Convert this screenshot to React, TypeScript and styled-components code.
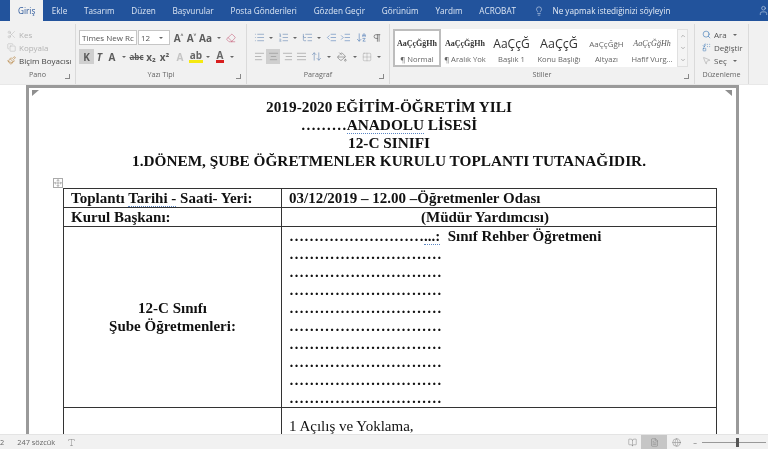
import React from "react";
import styled, { createGlobalStyle } from "styled-components";
import {
  Scissors, Copy, Paintbrush, Eraser, List, ListOrdered, ListTree, IndentDecrease, IndentIncrease,
  ArrowDownAZ, Pilcrow, AlignLeft, AlignCenter, AlignRight, AlignJustify, ArrowUpDown, PaintBucket,
  Grid2x2, Search, Replace, MousePointer2, User, Lightbulb, Move, BookOpen, FileText, Globe, Type, ChevronDown, ChevronUp,
} from "lucide-react";

const Global = createGlobalStyle`
  html, body { margin: 0; padding: 0; background: #fff; }
  * { box-sizing: border-box; }
`;

const Shell = styled.div`
  width: 768px; height: 449px; overflow: hidden; display: flex; flex-direction: column;
  font-family: "Open Sans", "Noto Sans", sans-serif; background: #fff; filter: blur(0.35px);
`;
const TabBar = styled.div`
  height: 21px; flex: none; background: #22539c; display: flex; align-items: stretch; padding-left: 10px; color: #dbe5f3; font-size: 8.2px;
`;
const Tab = styled.div<{ $active?: boolean }>`
  display: flex; align-items: center; padding: 0 8.4px; white-space: nowrap;
  ${(p) => p.$active && "background:#f1f1f1;color:#2b579a;margin-right:0;padding:0 8px;"}
`;
const Tell = styled.div`
  display: flex; align-items: center; gap: 8px; margin-left: 10px; white-space: nowrap; color: #e4ebf5; flex: 1;
`;
const UserSlot = styled.div`
  display: flex; align-items: center; padding-right: 0; margin-right: -1px;
`;
const Ribbon = styled.div`
  height: 63px; flex: none; background: #f1f1f1; display: flex; color: #555; font-size: 8px;
`;
const Group = styled.div<{ $w: number }>`
  width: ${(p) => p.$w}px; flex: none; display: flex; flex-direction: column; border-right: 1px solid #dadada; margin-top: 3px; position: relative;
`;
const GroupBody = styled.div`
  flex: 1; min-height: 0; display: flex; flex-direction: column; padding-top: 4px;
`;
const GroupLabel = styled.div`
  height: 17px; flex: none; text-align: center; font-size: 7.2px; color: #666; line-height: 14px;
`;
const Launcher = styled.span`
  position: absolute; right: 5px; bottom: 5px; width: 5px; height: 5px; border-right: 1px solid #888; border-bottom: 1px solid #888;
`;
const ClipRow = styled.div<{ $dim?: boolean }>`
  height: 15px; display: flex; align-items: center; gap: 3px; padding-left: 7px; font-size: 8px; color: ${(p) => (p.$dim ? "#b4b4b4" : "#444")}; white-space: nowrap;
`;
const ToolRow = styled.div<{ $pad: number }>`
  height: 19px; display: flex; align-items: center; padding-left: ${(p) => p.$pad}px;
`;
const FontBox = styled.div<{ $w: number }>`
  width: ${(p) => p.$w}px; height: 15px; background: #fff; border: 1px solid #c6c6c6; margin-right: 1px; font-size: 8px; color: #555; display: flex; align-items: center; justify-content: space-between; padding: 0 3px 0 2px; white-space: nowrap; overflow: hidden;
`;
const Tool = styled.div<{ $w?: number; $active?: boolean; $color?: string }>`
  width: ${(p) => p.$w ?? 14}px; height: 15px; flex: none; display: flex; align-items: center; justify-content: center;
  background: ${(p) => (p.$active ? "#cfcfcf" : "transparent")}; color: ${(p) => p.$color ?? "#5b5b5b"};
  font-size: 10px; font-weight: 700; white-space: nowrap;
`;
const Caret = styled.span`
  width: 0; height: 0; flex: none; border-left: 2px solid transparent; border-right: 2px solid transparent; border-top: 2px solid #666; margin: 0 3px 0 3px;
`;
const Colored = styled.span<{ $c: string }>`
  display: inline-block; line-height: 10px; border-bottom: 3px solid ${(p) => p.$c}; font-size: 10px; font-weight: 700; color: #666; padding: 0 1px;
`;
const Gallery = styled.div`
  margin: 1px 0 0 3px; height: 38px; width: 295px; display: flex; background: #fff; align-items: stretch;
`;
const StyleItem = styled.div<{ $w: number; $selected?: boolean }>`
  width: ${(p) => p.$w}px; flex: none; display: flex; flex-direction: column; align-items: center; justify-content: space-between; padding: 7px 0 2px; white-space: nowrap; overflow: hidden;
  ${(p) => (p.$selected ? "border: 2.5px solid #bdbdbd; padding: 5px 0 0;" : "")}
`;
const Preview = styled.div<{ $font: string; $size: number; $bold?: boolean; $italic?: boolean; $color?: string }>`
  font-family: ${(p) => p.$font}; font-size: ${(p) => p.$size}px; line-height: 15px; height: 15px; color: ${(p) => p.$color ?? "#333"};
  font-weight: ${(p) => (p.$bold ? 700 : 400)}; font-style: ${(p) => (p.$italic ? "italic" : "normal")};
`;
const StyleName = styled.div`
  font-size: 7.6px; line-height: 12px; color: #666;
`;
const GalleryScroll = styled.div`
  width: 11px; flex: none; margin-left: auto; display: flex; flex-direction: column; background: #f4f4f4; border: 1px solid #e0e0e0; color: #777; align-items: center; justify-content: space-around;
`;
const EditRow = styled.div`
  height: 15px; display: flex; align-items: center; gap: 3px; padding-left: 7px; font-size: 8px; color: #555; white-space: nowrap;
`;
const Doc = styled.div`
  flex: 1; min-height: 0; overflow: hidden; padding: 0 29px 0 26px; border-top: 1px solid #e8e8e8;
`;
const Page = styled.div`
  position: relative; height: 100%; border: 3px solid #9a9a9a; border-bottom: 0; padding: 10px 21px 0 34px;
  font-family: "Liberation Serif", "Times New Roman", serif; color: #111;
`;
const Corner = styled.span<{ $right?: boolean }>`
  position: absolute; top: 2px; ${(p) => (p.$right ? "right: 4px;" : "left: 3px;")} width: 0; height: 0;
  border-top: 6px solid #8f8f8f; ${(p) => (p.$right ? "border-left: 7px solid transparent;" : "border-right: 7px solid transparent;")}
`;
const Title = styled.div`
  text-align: center; font-weight: 700; font-size: 15.3px; line-height: 18px; white-space: nowrap; margin-left: 0;
`;
const Squiggle = styled.span`
  border-bottom: 1px dotted #5b87c5;
`;
const TableWrap = styled.div`
  position: relative; margin-top: 18px;
`;
const MoveHandle = styled.span`
  position: absolute; left: -10px; top: -10px; width: 10px; height: 10px; border: 1px solid #aaa; background: #fff; color: #555; display: flex; align-items: center; justify-content: center;
`;
const Table = styled.table`
  border-collapse: collapse; width: 653px; table-layout: fixed; font-size: 15px; line-height: 18px;
`;
const Cell = styled.td<{ $indent?: number; $center?: boolean; $bold?: boolean }>`
  border: 1px solid #333; padding: 0 0 0 ${(p) => p.$indent ?? 7}px; font-weight: ${(p) => (p.$bold ? 700 : 400)};
  white-space: nowrap; vertical-align: ${(p) => (p.$center ? "middle" : "top")}; ${(p) => (p.$center ? "text-align:center;padding:0;" : "")}
`;
const Status = styled.div`
  height: 15px; flex: none; background: #f1f1f1; display: flex; align-items: center; font-size: 7.4px; color: #666; border-top: 1px solid #e4e4e4;
`;
const StatusWords = styled.span`
  margin-left: 13px; margin-right: 12px; white-space: nowrap;
`;
const ViewBtn = styled.div<{ $active?: boolean; $w: number }>`
  width: ${(p) => p.$w}px; height: 14px; display: flex; align-items: center; justify-content: center; background: ${(p) => (p.$active ? "#c6c6c6" : "transparent")}; color: #777;
`;
const Slider = styled.div`
  width: 64px; height: 1px; background: #999; margin-left: 5px; position: relative;
`;
const Thumb = styled.span`
  position: absolute; left: 34px; top: -4px; width: 3px; height: 9px; background: #555;
`;

const dots = "………………………";
const fillLines = ["…………………………", "…………………………", "…………………………", "…………………………", "…………………………", "…………………………", "…………………………", "…………………………", "…………………………"];
const DotLine = styled.div`
  letter-spacing: 0.02em;
`;

export default function App() {
  return (
    <Shell>
      <Global />
      <TabBar>
        <Tab $active>Giriş</Tab>
        {["Ekle", "Tasarım", "Düzen", "Başvurular", "Posta Gönderileri", "Gözden Geçir", "Görünüm", "Yardım", "ACROBAT"].map((t) => (
          <Tab key={t}>{t}</Tab>
        ))}
        <Tell>
          <Lightbulb size={10} strokeWidth={1.3} />
          Ne yapmak istediğinizi söyleyin
        </Tell>
        <UserSlot><User size={11} strokeWidth={1.2} /></UserSlot>
      </TabBar>
      <Ribbon>
        <Group $w={76}>
          <GroupBody>
            <ClipRow $dim><Scissors size={9} strokeWidth={1.3} /> Kes</ClipRow>
            <ClipRow $dim><Copy size={9} strokeWidth={1.3} /> Kopyala</ClipRow>
            <ClipRow><Paintbrush size={9} strokeWidth={1.6} color="#b5813d" /> Biçim Boyacısı</ClipRow>
          </GroupBody>
          <GroupLabel>Pano</GroupLabel>
          <Launcher />
        </Group>
        <Group $w={171}>
          <GroupBody>
            <ToolRow $pad={3}>
              <FontBox $w={58}>Times New Rc <Caret /></FontBox>
              <FontBox $w={32}>12 <Caret /></FontBox>
              <Tool $w={15}>A˄</Tool>
              <Tool $w={11}>A˅</Tool>
              <Tool $w={17}>Aa</Tool><Caret />
              <Tool $w={14}><Eraser size={10} strokeWidth={1.3} color="#c2506e" /></Tool>
            </ToolRow>
            <ToolRow $pad={3}>
              <Tool $w={15} $active>K</Tool>
              <Tool $w={11} style={{ fontStyle: "italic" }}>T</Tool>
              <Tool $w={14}>A</Tool><Caret />
              <Tool $w={15} style={{ fontSize: 8, textDecoration: "line-through" }}>abc</Tool>
              <Tool $w={14}>x₂</Tool>
              <Tool $w={13}>x²</Tool>
              <Tool $w={18} $color="#c4c4c4">A</Tool>
              <Tool $w={14}><Colored $c="#f5e911">ab</Colored></Tool><Caret />
              <Tool $w={14}><Colored $c="#d81e1e">A</Colored></Tool><Caret />
            </ToolRow>
          </GroupBody>
          <GroupLabel>Yazı Tipi</GroupLabel>
          <Launcher />
        </Group>
        <Group $w={143}>
          <GroupBody>
            <ToolRow $pad={5}>
              <Tool><List size={11} strokeWidth={1.2} color="#5a7fae" /></Tool><Caret />
              <Tool><ListOrdered size={11} strokeWidth={1.2} color="#5a7fae" /></Tool><Caret />
              <Tool><ListTree size={11} strokeWidth={1.2} color="#5a7fae" /></Tool><Caret />
              <Tool><IndentDecrease size={11} strokeWidth={1.2} color="#4a78b5" /></Tool>
              <Tool><IndentIncrease size={11} strokeWidth={1.2} color="#4a78b5" /></Tool>
              <Tool $w={18}><ArrowDownAZ size={11} strokeWidth={1.3} color="#4a78b5" /></Tool>
              <Tool><Pilcrow size={10} strokeWidth={1.6} /></Tool>
            </ToolRow>
            <ToolRow $pad={5}>
              <Tool><AlignLeft size={11} strokeWidth={1.2} color="#888" /></Tool>
              <Tool $active><AlignCenter size={11} strokeWidth={1.2} color="#888" /></Tool>
              <Tool><AlignRight size={11} strokeWidth={1.2} color="#888" /></Tool>
              <Tool><AlignJustify size={11} strokeWidth={1.2} color="#888" /></Tool>
              <Tool $w={16}><ArrowUpDown size={11} strokeWidth={1.2} color="#5a7fae" /></Tool><Caret />
              <Tool $w={16}><PaintBucket size={10} strokeWidth={1.2} /></Tool><Caret />
              <Tool><Grid2x2 size={10} strokeWidth={1} color="#999" /></Tool><Caret />
            </ToolRow>
          </GroupBody>
          <GroupLabel>Paragraf</GroupLabel>
          <Launcher />
        </Group>
        <Group $w={305}>
          <GroupBody>
            <Gallery>
              <StyleItem $w={48} $selected>
                <Preview $font='"Liberation Serif", serif' $size={8} $bold>AaÇçĞğHh</Preview>
                <StyleName>¶ Normal</StyleName>
              </StyleItem>
              <StyleItem $w={48}>
                <Preview $font='"Liberation Serif", serif' $size={8} $bold>AaÇçĞğHh</Preview>
                <StyleName>¶ Aralık Yok</StyleName>
              </StyleItem>
              <StyleItem $w={45}>
                <Preview $font='"Open Sans", sans-serif' $size={12}>AaÇçĞ</Preview>
                <StyleName>Başlık 1</StyleName>
              </StyleItem>
              <StyleItem $w={50}>
                <Preview $font='"Open Sans", sans-serif' $size={12.5}>AaÇçĞ</Preview>
                <StyleName>Konu Başlığı</StyleName>
              </StyleItem>
              <StyleItem $w={45}>
                <Preview $font='"Open Sans", sans-serif' $size={8} $color="#666">AaÇçĞğH</Preview>
                <StyleName>Altyazı</StyleName>
              </StyleItem>
              <StyleItem $w={46}>
                <Preview $font='"Liberation Serif", serif' $size={8} $italic $color="#555">AaÇçĞğHh</Preview>
                <StyleName>Hafif Vurg...</StyleName>
              </StyleItem>
              <GalleryScroll>
                <ChevronUp size={6} /><ChevronDown size={6} /><ChevronDown size={6} />
              </GalleryScroll>
            </Gallery>
          </GroupBody>
          <GroupLabel>Stiller</GroupLabel>
          <Launcher />
        </Group>
        <Group $w={54}>
          <GroupBody>
            <EditRow><Search size={9} strokeWidth={1.5} color="#2b6cb0" /> Ara <Caret /></EditRow>
            <EditRow><Replace size={9} strokeWidth={1.3} color="#2b6cb0" /> Değiştir</EditRow>
            <EditRow><MousePointer2 size={9} strokeWidth={1.1} color="#888" /> Seç <Caret /></EditRow>
          </GroupBody>
          <GroupLabel>Düzenleme</GroupLabel>
        </Group>
      </Ribbon>
      <Doc>
        <Page>
          <Corner />
          <Corner $right />
          <Title>2019-2020 EĞİTİM-ÖĞRETİM YILI</Title>
          <Title>………<Squiggle>ANADOLU</Squiggle> LİSESİ</Title>
          <Title>12-C SINIFI</Title>
          <Title>1.DÖNEM, ŞUBE ÖĞRETMENLER KURULU TOPLANTI TUTANAĞIDIR.</Title>
          <TableWrap>
            <MoveHandle><Move size={8} strokeWidth={1.2} /></MoveHandle>
            <Table>
              <colgroup>
                <col width={218} />
                <col width={435} />
              </colgroup>
              <tbody>
                <tr>
                  <Cell $bold>Toplantı <Squiggle>Tarihi -</Squiggle> Saati- Yeri:</Cell>
                  <Cell $bold>03/12/2019 – 12.00 –Öğretmenler Odası</Cell>
                </tr>
                <tr>
                  <Cell $bold>Kurul Başkanı:</Cell>
                  <Cell $bold $indent={139}>(Müdür Yardımcısı)</Cell>
                </tr>
                <tr>
                  <Cell $bold $center>12-C Sınıfı<br />Şube Öğretmenleri:</Cell>
                  <Cell $bold>
                    <div>{dots}<Squiggle>...:</Squiggle>&nbsp; Sınıf Rehber Öğretmeni</div>
                    {fillLines.map((l, i) => <DotLine key={i}>{l}</DotLine>)}
                  </Cell>
                </tr>
                <tr>
                  <Cell />
                  <Cell>
                    <div style={{ paddingTop: 9 }}>1 Açılış ve Yoklama,</div>
                    <div>&nbsp;</div>
                  </Cell>
                </tr>
              </tbody>
            </Table>
          </TableWrap>
        </Page>
      </Doc>
      <Status>
        <span>2</span>
        <StatusWords>247 sözcük</StatusWords>
        <Type size={9} strokeWidth={1} />
        <div style={{ flex: 1 }} />
        <ViewBtn $w={18}><BookOpen size={9} strokeWidth={1.2} /></ViewBtn>
        <ViewBtn $w={26} $active><FileText size={9} strokeWidth={1.2} /></ViewBtn>
        <ViewBtn $w={18}><Globe size={9} strokeWidth={1.2} /></ViewBtn>
        <span style={{ marginLeft: 8 }}>–</span>
        <Slider><Thumb /></Slider>
        <div style={{ width: 2 }} />
      </Status>
    </Shell>
  );
}
